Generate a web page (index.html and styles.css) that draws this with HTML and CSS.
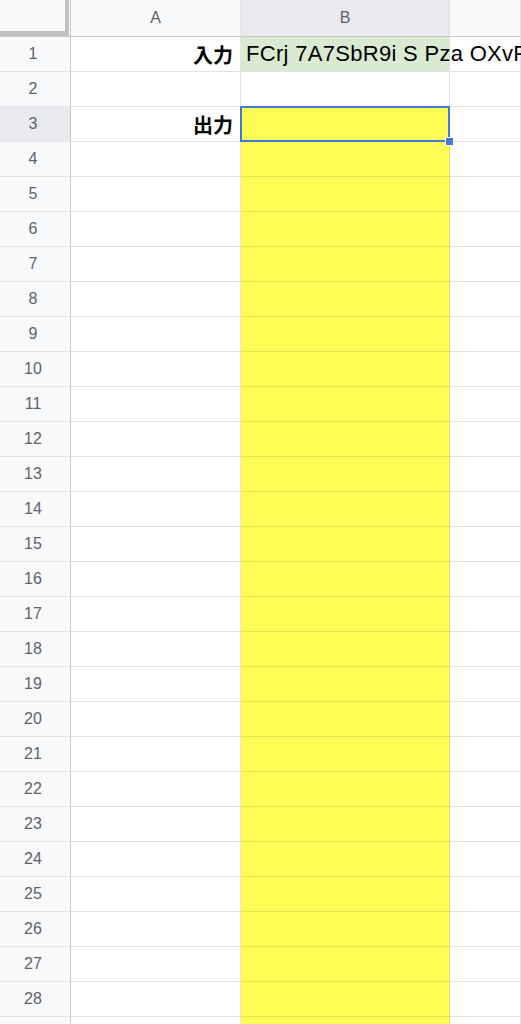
FILE: index.html
```html
<!DOCTYPE html>
<html lang="ja">

<head>
    <meta charset="UTF-8">
    <meta name="viewport" content="width=device-width, initial-scale=1.0">
    <title>Sheet</title>
    <link rel="stylesheet" href="styles.css">
</head>

<body>
    <div class="sheet" id="sheet">
        <div class="corner"><div class="corner-box"></div></div>
        <div class="col-head">A</div>
        <div class="col-head col-head-on">B</div>
        <div class="col-head"></div>
    </div>

    <script src="script.js"></script>
</body>

</html>
```

FILE: script.js
```js
const sheet = document.getElementById('sheet');

for (let row = 1; row <= 29; row++) {
    const head = document.createElement('div');
    head.className = row === 3 ? 'row-head row-head-on' : 'row-head';
    // row 29 sits below the window edge, its number is not visible
    head.innerText = row < 29 ? row : '';
    sheet.appendChild(head);

    const cellA = document.createElement('div');
    cellA.className = 'cell label';
    if (row === 1) cellA.innerText = '入力';
    if (row === 3) cellA.innerText = '出力';
    sheet.appendChild(cellA);

    const cellB = document.createElement('div');
    if (row === 1) {
        cellB.className = 'cell input-cell';
        cellB.innerText = 'FCrj 7A7SbR9i S Pza OXvP';
    } else if (row === 2) {
        cellB.className = 'cell';
    } else {
        cellB.className = 'cell output-cell';
    }
    if (row === 3) {
        cellB.innerHTML = '<div class="selection"><div class="handle"></div></div>';
    }
    sheet.appendChild(cellB);

    const cellC = document.createElement('div');
    cellC.className = 'cell';
    sheet.appendChild(cellC);
}
```

FILE: styles.css
```css
body {
    margin: 0;
    background-color: white;
    font-family: "Liberation Sans", Arial, "Noto Sans CJK JP", sans-serif;
    overflow: hidden;
}

.sheet {
    display: grid;
    grid-template-columns: 71px 170px 209px 1fr;
    grid-template-rows: 37px;
    grid-auto-rows: 35px;
    width: 521px;
}

.corner {
    background-color: #f8f9fa;
    border-right: 1px solid #c4c7c5;
    border-bottom: 1px solid #c4c7c5;
    box-sizing: border-box;
}

.corner-box {
    width: 69px;
    height: 36px;
    box-sizing: border-box;
    border-right: 4px solid #bfc1c3;
    border-bottom: 5px solid #bfc1c3;
}

.col-head {
    background-color: #f8f9fa;
    color: #5f6368;
    font-size: 16px;
    display: flex;
    align-items: center;
    justify-content: center;
    border-right: 1px solid #e0e2e4;
    border-bottom: 1px solid #c4c7c5;
    box-sizing: border-box;
}

.col-head-on {
    background-color: #e8eaed;
}

.row-head {
    background-color: #f8f9fa;
    color: #5f6368;
    font-size: 16px;
    display: flex;
    align-items: center;
    justify-content: center;
    padding-right: 4px;
    border-right: 1px solid #c4c7c5;
    border-bottom: 1px solid #e0e2e4;
    box-sizing: border-box;
}

.row-head-on {
    background-color: #e8eaed;
}

.cell {
    border-right: 1px solid #e2e3e3;
    border-bottom: 1px solid #e2e3e3;
    box-sizing: border-box;
    font-size: 22px;
    color: black;
    display: flex;
    align-items: center;
    white-space: nowrap;
}

.label {
    justify-content: flex-end;
    padding-right: 7px;
    font-family: "Noto Sans CJK JP", sans-serif;
    font-weight: bold;
    font-size: 20px;
}

.input-cell {
    background-color: #d9ead3;
    padding-left: 5px;
    letter-spacing: 0.3px;
    border-right-color: #d9ead3;
    overflow: visible;
    position: relative;
    z-index: 1;
}

.output-cell {
    background-color: #fffd55;
    border-right-color: #e6e44f;
    border-bottom-color: #e6e44f;
    position: relative;
}

.selection {
    position: absolute;
    top: -1px;
    left: -1px;
    right: -1px;
    bottom: -1px;
    border: 2px solid #437ad9;
    z-index: 2;
}

.handle {
    position: absolute;
    right: -6px;
    bottom: -6px;
    width: 7px;
    height: 7px;
    background-color: #437ad9;
    border: 1px solid white;
}
```
